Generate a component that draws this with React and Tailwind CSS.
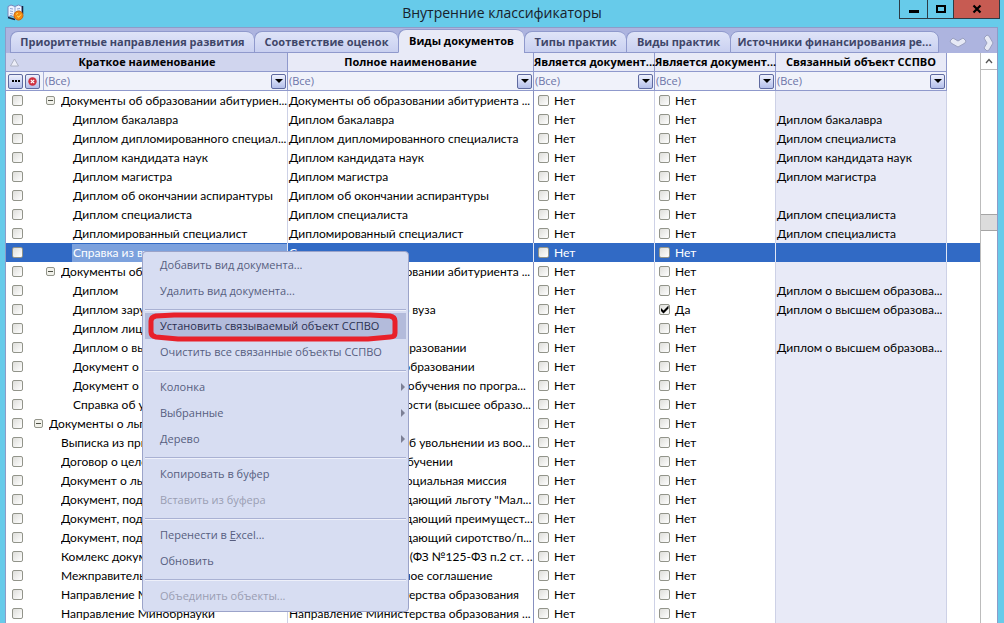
const tabs = [
  { name: 'Приоритетные направления развития', width: 'w-[244px]' },
  { name: 'Соответствие оценок', width: 'w-[144px]' },
  { name: 'Виды документов', width: 'w-[126px]', active: true },
  { name: 'Типы практик', width: 'w-[102px]' },
  { name: 'Виды практик', width: 'w-[104px]' },
  { name: 'Источники финансирования ре...', width: 'w-[209px]' },
];

const columns = [
  'Полное наименование',
  'Является документ...',
  'Является документ...',
  'Связанный объект ССПВО',
];

const rows = [
  { level: 1, group: true, short: 'Документы об образовании абитуриен...', full: 'Документы об образовании абитуриента ...' },
  { level: 2, short: 'Диплом бакалавра', full: 'Диплом бакалавра', linked: 'Диплом бакалавра' },
  { level: 2, short: 'Диплом дипломированного специал...', full: 'Диплом дипломированного специалиста', linked: 'Диплом специалиста' },
  { level: 2, short: 'Диплом кандидата наук', full: 'Диплом кандидата наук', linked: 'Диплом кандидата наук' },
  { level: 2, short: 'Диплом магистра', full: 'Диплом магистра', linked: 'Диплом магистра' },
  { level: 2, short: 'Диплом об окончании аспирантуры', full: 'Диплом об окончании аспирантуры' },
  { level: 2, short: 'Диплом специалиста', full: 'Диплом специалиста', linked: 'Диплом специалиста' },
  { level: 2, short: 'Дипломированный специалист', full: 'Дипломированный специалист', linked: 'Диплом специалиста' },
  { level: 2, selected: true, short: 'Справка из вуза', full: 'Справка из вуза' },
  { level: 1, group: true, short: 'Документы об образовании абитуриен...', full: 'Документы об образовании абитуриента ...' },
  { level: 2, short: 'Диплом', full: 'Диплом', linked: 'Диплом о высшем образова...' },
  { level: 2, short: 'Диплом зарубежного вуза', full: 'Диплом зарубежного вуза', second: true, linked: 'Диплом о высшем образова...' },
  { level: 2, short: 'Диплом лицея', full: 'Диплом лицея' },
  { level: 2, short: 'Диплом о высшем образовании', full: 'Диплом о высшем образовании', linked: 'Диплом о высшем образова...' },
  { level: 2, short: 'Документ о неполном образовании', full: 'Документ о полном образовании' },
  { level: 2, short: 'Документ о периоде обучения', full: 'Документ о периоде обучения по програ...' },
  { level: 2, short: 'Справка об успеваемости', full: 'Справка об успеваемости (высшее образо...' },
  { level: 0, group: true, short: 'Документы о льготах', full: '' },
  { level: 1, short: 'Выписка из приказа', full: 'Выписка из приказа об увольнении из воо...' },
  { level: 1, short: 'Договор о целевом обучении', full: 'Договор о целевом обучении' },
  { level: 1, short: 'Документ о льготе', full: 'Документ о льготе: социальная миссия' },
  { level: 1, short: 'Документ, подтверждающий льготу', full: 'Документ, подтверждающий льготу "Мал...' },
  { level: 1, short: 'Документ, подтверждающий', full: 'Документ, подтверждающий преимущест...' },
  { level: 1, short: 'Документ, подтверждающий', full: 'Документ, подтверждающий сиротство/п...' },
  { level: 1, short: 'Комлекс документов', full: 'Комлекс документов (ФЗ №125-ФЗ п.2 ст. ...' },
  { level: 1, short: 'Межправительственное', full: 'Межправительственное соглашение' },
  { level: 1, short: 'Направление Министерства', full: 'Направление Министерства образования' },
  { level: 1, short: 'Направление Минобрнауки', full: 'Направление Министерства образования ...' },
];

const menu = [
  [{ name: 'Добавить вид документа...' }, { name: 'Удалить вид документа...' }],
  [{ name: 'Установить связываемый объект ССПВО', active: true }, { name: 'Очистить все связанные объекты ССПВО' }],
  [{ name: 'Колонка', sub: true }, { name: 'Выбранные', sub: true }, { name: 'Дерево', sub: true }],
  [{ name: 'Копировать в буфер' }, { name: 'Вставить из буфера', disabled: true }],
  [{ name: <>Перенести в <u>E</u>xcel...</> }, { name: 'Обновить' }],
  [{ name: 'Объединить объекты...', disabled: true }],
];

const indents = ['pl-0', 'pl-3', 'pl-6'];

function Checkbox({ label, checked = false }) {
  return (
    <span className="grid size-[11px] shrink-0">
      <input
        type="checkbox"
        aria-label={label}
        defaultChecked={checked}
        className="peer [grid-area:1/1] size-[11px] appearance-none rounded-xs border border-[#92948a] bg-linear-to-br from-[#dededa] to-white"
      />
      <svg viewBox="0 0 11 11" className="pointer-events-none invisible [grid-area:1/1] size-[11px] peer-checked:visible">
        <path d="M2 4v3l2.500 2.500 5-5V1.500l-5 5z" fill="#000" />
      </svg>
    </span>
  );
}

function Filter({ label }) {
  return (
    <div className="grid h-[18px] min-w-0 grow items-center">
      <select
        aria-label={label}
        className="[grid-area:1/1] h-[18px] w-full appearance-none bg-transparent pl-px text-[#6c74a8] outline-none"
      >
        <option>(Все)</option>
      </select>
      <span className="pointer-events-none mr-px flex h-[15px] w-[15px] items-center justify-center justify-self-end rounded-xs border border-[#5f6a9f] bg-linear-to-b from-[#eef1fd] to-[#b4bfea] [grid-area:1/1]">
        <svg viewBox="0 0 8 4" className="h-1 w-2"><path d="M0 0h8L4 4z" fill="#000" /></svg>
      </span>
    </div>
  );
}

function TitleBar() {
  return (
    <header className="grid h-[27px] shrink-0 grid-cols-[1fr_auto_1fr]">
      <svg viewBox="0 0 17 17" className="mt-1 ml-[7px] size-[17px]">
        <path d="M1 2.500L4 1l4 1.500L11.500 1 15 2.500V13l-3.500-1.500L8 13.500 4 11.500 1 13z" fill="#eef3ff" stroke="#7486bb" />
        <path d="M8 2.500v10.500M3 4.500l3 .5M3 7l3 .5M3 9.500l3 .5M10 5l3-.5M10 7.500l3-.5" fill="none" stroke="#8fa3d4" />
        <path d="M15.500 2v8M1 13.500l7 2" stroke="#14203f" fill="none" strokeWidth="1.500" />
        <circle cx="11.500" cy="11.500" r="4.500" fill="#f58a10" stroke="#c8640c" />
        <path d="M9 10.500l2-1.500M11.500 13.500l2.500-3M10 12l2 1" stroke="#ffe05a" fill="none" />
      </svg>
      <h1 className="text-[14px] leading-[26px] text-[#17212b]">Внутренние классификаторы</h1>
      <div className="mr-1 flex h-[19px] justify-self-end border border-t-0 border-[#2c3c46]">
        <button aria-label="Свернуть" className="flex w-[27px] items-center justify-center">
          <svg viewBox="0 0 10 10" className="size-[10px]"><path d="M0 6h10v3H0z" /></svg>
        </button>
        <button aria-label="Развернуть" className="flex w-[27px] items-center justify-center border-x border-[#2c3c46]">
          <svg viewBox="0 0 10 10" className="size-[10px]"><path d="M1 2h8v6H1z" fill="none" stroke="#000" strokeWidth="2" /></svg>
        </button>
        <button aria-label="Закрыть" className="flex w-[45px] items-center justify-center bg-[#c75b52]">
          <svg viewBox="0 0 10 10" className="size-[10px]"><path d="M1.500 1.500l7 7M8.500 1.500l-7 7" stroke="#000" strokeWidth="2.200" /></svg>
        </button>
      </div>
    </header>
  );
}

function Tabs() {
  return (
    <nav className="flex h-[25px] shrink-0 items-end bg-[#adb4df] pl-1">
      {tabs.map(tab => (
        <button
          key={tab.name}
          className={`${tab.width} shrink-0 overflow-hidden rounded-t-lg border border-r-0 font-bold whitespace-nowrap last-of-type:border-r ${
            tab.active
              ? 'h-6 border-[#8f99cc] border-b-[#e8eaf7] bg-[#e8eaf7] text-black'
              : 'h-[22px] border-[#8f99cc] bg-linear-to-b from-[#dfe4f8] to-[#c9d0f0] text-[#3f4669]'
          }`}
        >
          {tab.name}
        </button>
      ))}
      <div className="flex grow items-center justify-between self-stretch pr-[3px] pl-[10px]">
        <svg viewBox="0 0 18 11" className="mt-1 h-[11px] w-[18px]">
          <path d="M1 4L4 1l5 3 5-3 3 3-1 2-7 4-7-4z" fill="#e6e9f5" stroke="#9aa0c0" />
        </svg>
        <svg viewBox="0 0 11 18" className="mt-1 h-[18px] w-[11px]">
          <path d="M4 1L1 4l3 5-3 5 3 3 2-1 4-7-4-7z" fill="#e6e9f5" stroke="#9aa0c0" />
        </svg>
      </div>
    </nav>
  );
}

function DataRow({ row }) {
  const line = row.selected ? 'border-[#e0e6f5]' : 'border-[#cdd1e6]';
  return (
    <tr className={`h-[19px] ${row.selected ? 'bg-[#316ac5] text-white' : 'text-black'}`}>
      <td className="pl-[6px]"><Checkbox label={row.short} /></td>
      <td className={`border-r ${line}`}>
        <div className={`flex items-center ${indents[row.level]}`}>
          {row.group ? (
            <button aria-label="Свернуть группу" className="mr-[6px] flex size-[9px] shrink-0 items-center justify-center rounded-xs border border-[#92948a] bg-[#f1f1ea]">
              <span className="h-px w-[5px] bg-[#4c4f44]" />
            </button>
          ) : (
            <span className={row.level === 2 ? 'w-[14px] shrink-0' : 'w-[15px] shrink-0'} />
          )}
          <span className={`grow overflow-hidden ${row.selected ? 'bg-[#7ca1dd] pl-px' : row.level === 2 ? 'pl-px' : ''}`}>{row.short}</span>
        </div>
      </td>
      <td className={`overflow-hidden border-r pl-px ${row.selected ? line : 'border-[#8790bf]'}`}>{row.full}</td>
      {[false, row.second].map((checked, i) => (
        <td key={i} className={`border-r pl-1 ${line}`}>
          <label className="flex items-center gap-[5px]">
            <Checkbox checked={checked} />
            {checked ? 'Да' : 'Нет'}
          </label>
        </td>
      ))}
      <td className={`overflow-hidden border-r pl-px ${line} ${row.selected ? '' : 'bg-[#e8eaf7]'}`}>{row.linked}</td>
      <td />
    </tr>
  );
}

function Grid() {
  return (
    <div className="min-w-0 grow overflow-hidden bg-white">
      <table className="w-full table-fixed border-separate border-spacing-0 whitespace-nowrap">
        <colgroup>
          <col className="w-7" />
          <col className="w-[254px]" />
          <col className="w-[246px]" />
          <col className="w-[121px]" />
          <col className="w-[121px]" />
          <col className="w-[171px]" />
          <col />
        </colgroup>
        <thead>
          <tr className="h-[19px] bg-[#e8eaf7]">
            <th colSpan={2} className="border-r border-b border-[#8f99cc] bg-[#d0d5ee]">
              <div className="flex h-[18px] items-center">
                <svg viewBox="0 0 9 9" className="ml-1 size-[9px]"><path d="M4.500 1L8.500 8h-8z" fill="#eceef8" stroke="#a3a7b8" strokeWidth="0.800" /></svg>
                <span className="mr-3 grow">Краткое наименование</span>
              </div>
            </th>
            {columns.map((name, i) => (
              <th key={i} className="border-r border-b border-[#8f99cc]">{name}</th>
            ))}
            <th className="bg-white" />
          </tr>
          <tr className="h-[19px] bg-[#f0f2fa]">
            <td colSpan={2} className="border-r border-b border-[#8f99cc]">
              <div className="flex h-[18px] items-center">
                <button aria-label="Условие" className="ml-[2px] flex size-[15px] items-center justify-center rounded-xs border border-[#5f6a9f] bg-linear-to-b from-[#eef1fd] to-[#b4bfea]">
                  <svg viewBox="0 0 8 2" className="h-[2px] w-2"><path d="M0 0h2v2H0zM3 0h2v2H3zM6 0h2v2H6z" /></svg>
                </button>
                <button aria-label="Сбросить" className="mx-[2px] flex size-[15px] items-center justify-center rounded-xs border border-[#5f6a9f] bg-linear-to-b from-[#eef1fd] to-[#b4bfea]">
                  <svg viewBox="0 0 9 9" className="size-[9px]">
                    <circle cx="4.500" cy="4.500" r="4.200" fill="#cf3140" />
                    <path d="M2.800 2.800l3.400 3.400M6.200 2.800L2.800 6.200" stroke="#fff" strokeWidth="1.200" />
                  </svg>
                </button>
                <span className="ml-px h-[18px] w-px bg-[#a9b1d8]" />
                <Filter label="Краткое наименование" />
              </div>
            </td>
            {columns.map((name, i) => (
              <td key={i} className="border-r border-b border-[#8f99cc]"><Filter label={name} /></td>
            ))}
            <td className="bg-white" />
          </tr>
        </thead>
        <tbody className="font-[Lato,'Open_Sans',sans-serif] text-[12px]">
          {rows.map((row, i) => <DataRow key={i} row={row} />)}
        </tbody>
      </table>
    </div>
  );
}

function Scrollbar() {
  return (
    <div className="flex w-[17px] shrink-0 flex-col border-l border-[#bcbcbc] bg-white">
      <button aria-label="Вверх" className="flex h-[17px] items-center justify-center border-b border-[#bcbcbc]">
        <svg viewBox="0 0 8 6" className="h-[6px] w-2"><path d="M1 5l3-3.500L7 5" fill="none" stroke="#555" strokeWidth="1.300" /></svg>
      </button>
      <div className="grow">
        <div className="h-[26%]" />
        <div className="h-[17px] border-y border-[#a5a5a5] bg-[#dcdcdc]" />
      </div>
    </div>
  );
}

function ContextMenu() {
  return (
    <div role="menu" className="absolute top-[251px] left-[142px] w-[267px] rounded-sm border border-[#9ba3c9] bg-[#d7ddf2] px-[2px] pb-[2px]">
      {menu.map((section, i) => (
        <div key={i}>
          {i > 0 && <div className="h-[9px] pt-[5px]"><hr className="h-[2px] border-t border-b border-t-[#a9b1d3] border-b-[#eef0fa]" /></div>}
          {section.map((item, j) => (
            <button
              key={j}
              role="menuitem"
              disabled={item.disabled}
              className={`flex h-[26px] w-full items-center pl-[15px] text-left whitespace-nowrap ${
                item.active ? 'bg-[#b3bbdb] text-[#2b3050]' : item.disabled ? 'text-[#9a9eb3]' : 'text-[#565d80]'
              }`}
            >
              <span className="grow">{item.name}</span>
              {item.sub && <svg viewBox="0 0 4 8" className="mr-px h-2 w-1"><path d="M0 0l4 4-4 4z" fill="#7c8095" /></svg>}
            </button>
          ))}
        </div>
      ))}
      <svg viewBox="0 0 250 30" className="pointer-events-none absolute top-[60px] left-[5px] h-[30px] w-[250px]">
        <path d="M26 3H222L242 4Q247 5 247 9V21Q247 25 242 25L220 27H30L8 25Q3 24 3 20V9Q3 5 8 4Z" fill="none" stroke="#e8202a" strokeWidth="5" strokeLinejoin="round" />
      </svg>
    </div>
  );
}

export default function App() {
  return (
    <div className="relative flex h-screen flex-col overflow-hidden bg-[#67cbea] font-['Open_Sans','Noto_Sans',sans-serif] text-[11px] leading-[18px]">
      <TitleBar />
      <main className="mr-[6px] ml-[5px] flex min-h-0 grow flex-col border border-b-0 border-[#8d9cc8]">
        <Tabs />
        <div className="flex min-h-0 grow">
          <Grid />
          <Scrollbar />
        </div>
      </main>
      <ContextMenu />
    </div>
  );
}
